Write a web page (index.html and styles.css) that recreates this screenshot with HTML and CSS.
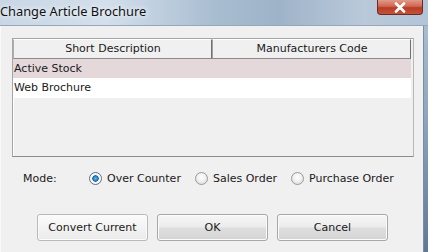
FILE: index.html
```html
<!DOCTYPE html>
<html>
<head>
<meta charset="utf-8">
<link rel="stylesheet" href="styles.css">
</head>
<body>
<div class="window">
  <div class="titlebar">
    <span class="title">Change Article Brochure</span>
    <div class="close"><svg width="14" height="11" viewBox="0 0 14 11"><path d="M3 1.5 L11 9.5 M11 1.5 L3 9.5" stroke="#fff" stroke-width="2.6" stroke-linecap="round"/></svg></div>
  </div>
  <div class="main">
    <div class="client">
      <div class="listbox">
        <div class="row header">
          <div class="cell hcell">Short Description</div>
          <div class="cell hcell">Manufacturers Code</div>
        </div>
        <div class="row selected">
          <div class="cell">Active Stock</div>
          <div class="cell"></div>
        </div>
        <div class="row white">
          <div class="cell">Web Brochure</div>
          <div class="cell"></div>
        </div>
      </div>
      <div class="mode">
        <span class="mode-label">Mode:</span>
        <label class="radio"><span class="dot on"></span>Over Counter</label>
        <label class="radio"><span class="dot"></span>Sales Order</label>
        <label class="radio"><span class="dot"></span>Purchase Order</label>
      </div>
      <div class="buttons">
        <button class="btn flat">Convert Current</button>
        <button class="btn">OK</button>
        <button class="btn">Cancel</button>
      </div>
    </div>
    <div class="frame-right"></div>
  </div>
</div>
</body>
</html>
```

FILE: styles.css
```css
html, body {
  margin: 0;
  padding: 0;
  width: 428px;
  height: 252px;
  overflow: hidden;
  background: #f0f0f0;
}
.window {
  display: flex;
  flex-direction: column;
  width: 428px;
  height: 252px;
  font-family: "DejaVu Sans", sans-serif;
  font-size: 11px;
  color: #1a1a1a;
}
.titlebar {
  height: 25px;
  display: flex;
  align-items: flex-start;
  justify-content: space-between;
  background: linear-gradient(90deg, #c9d6e4 0%, #d3dfeb 25%, #a9bdd1 50%, #9fb3c8 65%, #b9c9da 85%, #b2c4d6 100%);
  border-bottom: 1px solid #97a6b8;
}
.title {
  font-family: "Noto Sans", "Open Sans", sans-serif;
  font-size: 12.8px;
  color: #111;
  line-height: 18px;
  margin-top: 2px;
  text-shadow: 0 0 6px #eef3f8, 0 0 4px #eef3f8;
}
.close {
  width: 46px;
  height: 15px;
  margin-right: 5px;
  border: 1px solid #6b2b22;
  border-top: none;
  border-radius: 0 0 4px 4px;
  background: linear-gradient(180deg, #e2998a 0%, #cf6652 45%, #b93c25 55%, #c4513a 100%);
  display: flex;
  align-items: center;
  justify-content: center;
  box-sizing: border-box;
}
.main {
  flex: 1;
  display: flex;
}
.client {
  flex: 1;
  background: #f0f0f0;
  border-left: 1px solid #fafafa;
  padding: 12px 0 0 11px;
  display: flex;
  flex-direction: column;
}
.frame-right {
  width: 4px;
  background: linear-gradient(180deg, #a9bcd0 0%, #8ea5bd 40%, #5f7896 100%);
  border-left: 1px solid #7d8ea3;
}
.listbox {
  width: 400px;
  height: 117px;
  border: 1px solid #a5a5a5;
  border-right-color: #b8b8b8;
  border-bottom-color: #8d8d8d;
  box-shadow: inset 1px 1px 0 #ffffff;
  background: #f0f0f0;
}
.row {
  display: flex;
  width: 398px;
}
.cell {
  width: 199px;
  box-sizing: border-box;
  padding-left: 1px;
  white-space: nowrap;
}
.header {
  height: 20px;
}
.hcell {
  text-align: center;
  background: #f0f0f0;
  border-top: 1px solid #ffffff;
  border-left: 1px solid #a0a0a0;
  border-right: 1px solid #707070;
  border-bottom: 1px solid #8a8a8a;
  line-height: 18px;
  height: 20px;
}
.hcell:first-child {
  border-left-color: #b0b0b0;
}
.selected {
  background: #e5d8da;
  height: 19px;
  line-height: 19px;
}
.white {
  background: #ffffff;
  height: 20px;
  line-height: 19px;
}
.mode {
  display: flex;
  align-items: center;
  height: 18px;
  margin-top: 12px;
}
.mode-label {
  margin-left: 11px;
  width: 66px;
}
.radio {
  display: flex;
  align-items: center;
  margin-right: 14px;
}
.dot {
  width: 13px;
  height: 13px;
  border-radius: 50%;
  border: 1px solid #9a9a9a;
  background: radial-gradient(circle at 50% 40%, #ffffff 0%, #f3f3f3 40%, #d6d6d6 100%);
  margin-right: 5px;
  box-sizing: border-box;
}
.dot.on {
  background: radial-gradient(circle at 50% 50%, #6fb7e6 0%, #2a7fbf 28%, #1d5e94 38%, #e6eef5 44%, #ffffff 70%, #dcdcdc 100%);
  border-color: #5a6f85;
}
.buttons {
  display: flex;
  margin-top: 27px;
  margin-left: 25px;
  gap: 9px;
}
.btn {
  width: 111px;
  height: 27px;
  font-family: inherit;
  font-size: 11px;
  color: #1a1a1a;
  border: 1px solid #a8a8a8;
  border-radius: 3px;
  background: linear-gradient(180deg, #f6f6f6 0%, #ececec 48%, #dedede 52%, #d4d4d4 100%);
  box-shadow: inset 0 0 0 1px #fbfbfb;
  padding: 0;
}
.btn.flat {
  background: linear-gradient(180deg, #fbfbfb 0%, #f3f3f3 50%, #eaeaea 100%);
  border-color: #b9b9b9;
}
```
